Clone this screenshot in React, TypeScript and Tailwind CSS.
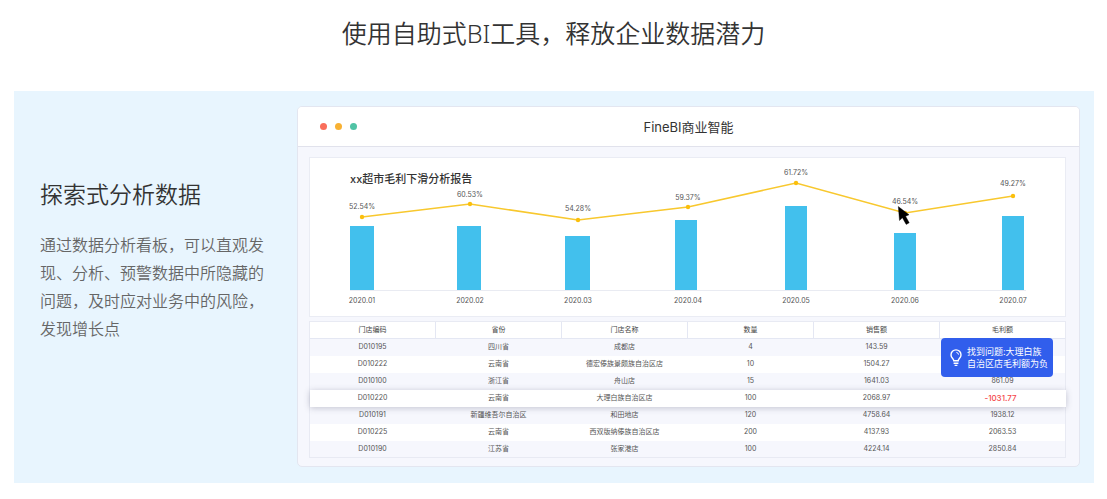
import { clsx } from "clsx";

// bar and line positions in chart units
const MONTHS = [
  { label: "2020.01", rate: "52.54%", x: 40, w: 24, top: 68, px: 52, py: 59, ry: 51 },
  { label: "2020.02", rate: "60.53%", x: 147, w: 24, top: 68, px: 160, py: 46, ry: 39 },
  { label: "2020.03", rate: "54.28%", x: 255, w: 25, top: 78, px: 268, py: 62, ry: 53 },
  { label: "2020.04", rate: "59.37%", x: 365, w: 22, top: 62, px: 378, py: 49, ry: 42 },
  { label: "2020.05", rate: "61.72%", x: 475, w: 22, top: 48, px: 486, py: 25, ry: 17 },
  { label: "2020.06", rate: "46.54%", x: 584, w: 22, top: 75, px: 595, py: 55, ry: 46 },
  { label: "2020.07", rate: "49.27%", x: 692, w: 22, top: 58, px: 703, py: 38, ry: 28 },
];

const AXIS_Y = 132;

const COLUMNS = ["门店编码", "省份", "门店名称", "数量", "销售额", "毛利额"];

const ROWS = [
  ["D010195", "四川省", "成都店", "4", "143.59", ""],
  ["D010222", "云南省", "德宏傣族景颇族自治区店", "10", "1504.27", ""],
  ["D010100", "浙江省", "舟山店", "15", "1641.03", "861.09"],
  ["D010220", "云南省", "大理白族自治区店", "100", "2068.97", "-1031.77"],
  ["D010191", "新疆维吾尔自治区", "和田地店", "120", "4758.64", "1938.12"],
  ["D010225", "云南省", "西双版纳傣族自治区店", "200", "4137.93", "2063.53"],
  ["D010190", "江苏省", "张家港店", "100", "4224.14", "2850.84"],
];

const PROBLEM_CODE = "D010220";

function ProfitChart() {
  return (
    <svg viewBox="0 0 755 158" className="block h-auto w-full" role="img" aria-label="毛利下滑分析">
      <text x="40" y="25" className="fill-[#333333] text-[11px] font-medium">
        xx超市毛利下滑分析报告
      </text>
      <path d={`M40 ${AXIS_Y + 0.5}H716`} stroke="#e9ebf2" />
      {MONTHS.map((m) => (
        <g key={m.label}>
          <rect x={m.x} y={m.top} width={m.w} height={AXIS_Y - m.top} fill="#42c0ed" />
          <text x={m.px} y="145" textAnchor="middle" className="fill-[#555555] text-[7px]">
            {m.label}
          </text>
        </g>
      ))}
      <polyline
        points={MONTHS.map((m) => `${m.px},${m.py}`).join(" ")}
        fill="none"
        stroke="#f8c82e"
        strokeWidth="1.5"
      />
      {MONTHS.map((m) => (
        <g key={m.rate}>
          <circle cx={m.px} cy={m.py} r="2.2" fill="#fbbf0c" />
          <text x={m.px} y={m.ry} textAnchor="middle" className="fill-[#555555] text-[7px]">
            {m.rate}
          </text>
        </g>
      ))}
      {/* mouse pointer */}
      <path
        d="M588.3 48.5L589.5 62.5L592.4 59.8L596.2 66.4L599.2 64.8L595.6 58.2L599 56.8Z"
        fill="#000000"
        stroke="#000000"
        strokeWidth="0.4"
      />
    </svg>
  );
}

function StoreTable() {
  return (
    <table className="w-full table-fixed border-collapse text-center text-[7px] leading-[16px] text-[#555555] outline outline-1 -outline-offset-1 outline-[#e8eaf3]">
      <thead>
        <tr className="h-[17px] bg-white text-[#444444]">
          {COLUMNS.map((c) => (
            <th key={c} scope="col" className="border border-[#e4e7f3] p-0 font-normal">
              {c}
            </th>
          ))}
        </tr>
      </thead>
      <tbody>
        {ROWS.map((row, i) => {
          const problem = row[0] === PROBLEM_CODE;
          return (
            <tr
              key={row[0]}
              className={clsx(
                "h-[17px]",
                i % 2 === 1 ? "bg-white" : "bg-[#f6f7fd]",
                problem && "relative shadow-[0_1px_6px_rgba(60,60,90,0.28)]",
              )}
            >
              {row.map((cell, j) => (
                <td
                  key={j}
                  className={clsx("p-0", problem && j === 5 && "pr-1 text-[8px] font-medium text-[#f5474b]")}
                >
                  {cell}
                </td>
              ))}
            </tr>
          );
        })}
      </tbody>
    </table>
  );
}

function ProblemTip() {
  return (
    <div className="absolute top-[17px] right-[13px] flex h-[39px] w-[112px] items-center gap-1 rounded-[4px] bg-[#315eec] pl-2 text-[9px] leading-[12px] whitespace-nowrap text-white">
      <svg viewBox="0 0 14 18" className="h-[18px] w-[14px] shrink-0" fill="none" stroke="#ffffff" strokeWidth="1.4">
        <path d="M4.8 11.8C4.8 9.8 2 9 2 5.9A5 5 0 0 1 12 5.9C12 9 9.2 9.8 9.2 11.8Z" />
        <path d="M7.4 3.4A2.4 2.4 0 0 1 9.5 5.6" strokeWidth="1" />
        <path d="M4.6 14.2H9.4M5.6 16.4H8.4" />
      </svg>
      <p>
        找到问题:大理白族
        <br />
        自治区店毛利额为负
      </p>
    </div>
  );
}

export default function App() {
  return (
    <section className="bg-white pt-[15px] font-['Noto_Sans','Noto_Sans_CJK_SC',sans-serif] text-[#333333]">
      <h1 className="mb-10 text-center text-[25px] leading-9 font-[350]">
        使用自助式BI工具，释放企业数据潜力
      </h1>

      <div className="mr-[13px] ml-[14px] flex bg-[#e8f5fe] pt-[15px] pr-[14px] pb-4">
        <div className="w-[283px] shrink-0 pt-[72px] pr-[26px] pl-[26px]">
          <h2 className="text-[23px] leading-8 font-[350]">探索式分析数据</h2>
          <p className="mt-[21px] text-[16px] leading-7 font-[350] text-[#666666]">
            通过数据分析看板，可以直观发现、分析、预警数据中所隐藏的问题，及时应对业务中的风险，发现增长点
          </p>
        </div>

        <div className="min-w-0 flex-1 overflow-hidden rounded-[5px] border border-[#e3e6f0] bg-[#f6f7fd] font-['Inter','Noto_Sans_CJK_SC',sans-serif]">
          <div className="grid h-10 grid-cols-[1fr_auto_1fr] items-center border-b border-[#e1e2ec] bg-white">
            <div className="flex gap-2 pl-[22px]">
              <span className="size-[7px] rounded-full bg-[#f96e5b]" />
              <span className="size-[7px] rounded-full bg-[#f8b133]" />
              <span className="size-[7px] rounded-full bg-[#50c3a5]" />
            </div>
            <h3 className="text-[13px] leading-5">FineBI商业智能</h3>
          </div>
          <div className="flex flex-col gap-1 pt-[10px] pr-[13px] pb-2 pl-[11px]">
            <div className="border border-[#eaecf4] bg-white">
              <ProfitChart />
            </div>
            <div className="relative">
              <StoreTable />
              <ProblemTip />
            </div>
          </div>
        </div>
      </div>
    </section>
  );
}
